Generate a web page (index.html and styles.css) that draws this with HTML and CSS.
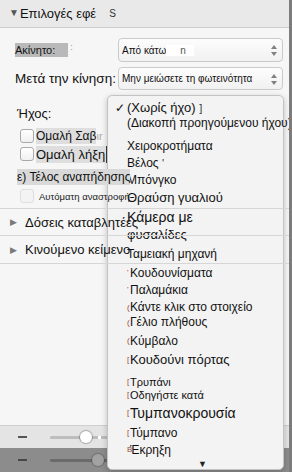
FILE: index.html
```html
<!DOCTYPE html>
<html lang="el">
<head>
    <meta charset="UTF-8">
    <meta name="viewport" content="width=device-width, initial-scale=1.0">
    <title>Επιλογές εφέ</title>
    <link rel="stylesheet" href="styles.css">
</head>
<body>
    <div class="window">
        <div class="main">
            <div class="pane-head">
                <span class="tri-down">&#9660;</span>Επιλογές εφέ<span class="stray">S</span>
            </div>

            <div class="pane">
                <div class="row row-first">
                    <span class="label label-hl">Ακίνητο:</span><span class="dots">:</span>
                    <div class="select">
                        Από κάτω<span class="ghost">n</span>
                        <svg class="spin" width="6" height="11" viewBox="0 0 6 11"><path d="M3 0L6 4H0Z M3 11L6 7H0Z" fill="#808080"/></svg>
                    </div>
                </div>
                <div class="row row-second">
                    <span class="label label-big">Μετά την κίνηση:</span>
                    <div class="select">
                        Μην μειώσετε τη φωτεινότητα
                        <svg class="spin" width="6" height="11" viewBox="0 0 6 11"><path d="M3 0L6 4H0Z M3 11L6 7H0Z" fill="#808080"/></svg>
                    </div>
                </div>
                <div class="row row-sound">
                    <span class="label label-sound">Ήχος:</span>
                </div>

                <div class="check-row cb-one">
                    <span class="box"></span><span class="shade">Ομαλή Σαβ</span><span class="faint">ιr</span>
                </div>
                <div class="check-row cb-two">
                    <span class="box"></span><span class="shade shade-big">Ομαλή λήξη</span>
                </div>
                <div class="check-row cb-bounce">
                    <span class="shade shade-wide">ε) Τέλος αναπήδησης</span>
                </div>
                <div class="check-row cb-auto">
                    <span class="box box-off"></span><span class="small-text">Αυτόματη αναστροφή</span>
                </div>

                <div class="section sec-first">
                    <span class="tri-right">&#9654;</span><span class="sec-title">Δόσεις καταβλητέες</span>
                </div>
                <div class="section">
                    <span class="tri-right">&#9654;</span><span class="sec-title">Κινούμενο κείμενο</span>
                </div>
            </div>

            <div class="zoom-bar zoom-light">
                <span class="minus"></span>
                <div class="track"><span class="knob"></span><span class="tick"></span></div>
            </div>
            <div class="zoom-bar zoom-dark">
                <span class="minus"></span>
                <div class="track"><span class="knob"></span></div>
            </div>
        </div>

        <div class="menu">
            <div class="item h16 mid"><span class="check">&#10003;</span>(Χωρίς ήχο) <span class="brk">]</span></div>
            <div class="item h14">(Διακοπή προηγούμενου ήχου)</div>
            <div class="item h16 gap8">Χειροκροτήματα</div>
            <div class="item h18">Βέλος <span class="brk">'</span></div>
            <div class="item h16">Μπόνγκο</div>
            <div class="item h20 mid">Θραύση γυαλιού</div>
            <div class="item h18 big">Κάμερα με</div>
            <div class="item h18 mid">φυσαλίδες</div>
            <div class="item h20">Ταμειακή μηχανή</div>
            <div class="item h18 marked"><span class="mark">'</span>Κουδουνίσματα</div>
            <div class="item h16 marked"><span class="mark">'</span>Παλαμάκια</div>
            <div class="item h15 gap2 marked"><span class="mark">(</span>Κάντε κλικ στο στοιχείο</div>
            <div class="item h15 marked"><span class="mark">(</span>Γέλιο πλήθους</div>
            <div class="item h22 marked"><span class="mark">(</span>Κύμβαλο</div>
            <div class="item h16 mid marked"><span class="mark">[</span>Κουδούνι πόρτας</div>
            <div class="item h14 gap7 tiny marked"><span class="mark">[</span>Τρυπάνι</div>
            <div class="item h12 tiny marked"><span class="mark">[</span>Οδηγήστε κατά</div>
            <div class="item h24 big marked"><span class="mark">[</span>Τυμπανοκρουσία</div>
            <div class="item h16 marked"><span class="mark">[</span>Τύμπανο</div>
            <div class="item h18 marked"><span class="mark">B</span>Έκρηξη</div>
            <div class="more">&#9660;</div>
        </div>
    </div>
</body>
</html>
```

FILE: styles.css
```css
body {
    margin: 0;
    font-family: "Liberation Sans", Arial, sans-serif;
    color: #111;
    background: #fff;
}
.window {
    position: relative;
    width: 289px;
    height: 472px;
    border-right: 3px solid #7c7c7c;
    background: #f6f6f6;
    overflow: hidden;
}
.main {
    display: flex;
    flex-direction: column;
    height: 100%;
}
.pane-head {
    box-sizing: border-box;
    height: 28px;
    border-bottom: 1px solid #cdcdcd;
    background: #e9e9e9;
    display: flex;
    align-items: center;
    padding-left: 9px;
    font-size: 13px;
}
.tri-down {
    font-size: 10px;
    color: #555;
    margin-right: 1px;
    margin-top: -2px;
}
.stray {
    font-size: 10px;
    margin-left: 13px;
    color: #333;
}
.pane {
    flex: 1;
    padding-top: 10px;
}
.row {
    display: flex;
    align-items: center;
    padding: 0 6px 0 15px;
}
.row-first { height: 24px; }
.row-second { height: 23px; margin-top: 5px; }
.row-sound { height: 22px; margin-top: 12px; }
.label {
    flex: 0 0 auto;
    white-space: nowrap;
}
.label-hl {
    font-size: 11px;
    background: #b9b9b9;
    padding: 1px 13px 1px 0;
}
.dots {
    font-size: 9px;
    color: #999;
    margin-left: 2px;
    margin-top: -6px;
}
.label-big { font-size: 13.5px; }
.label-sound { font-size: 13px; padding-left: 2px; }
.select {
    position: relative;
    width: 165px;
    height: 100%;
    margin-left: auto;
    box-sizing: border-box;
    border: 1px solid #cacaca;
    border-radius: 4px;
    background: linear-gradient(#fdfdfd, #f1f1f1);
    font-size: 10px;
    display: flex;
    align-items: center;
    padding-left: 3px;
    white-space: nowrap;
}
.ghost {
    background: #fff;
    padding: 0 8px 0 14px;
    color: #555;
}
.spin {
    position: absolute;
    right: 5px;
    top: 6px;
}
.check-row {
    display: flex;
    align-items: center;
    height: 18px;
    padding-left: 20px;
    position: relative;
    z-index: 2;
    white-space: nowrap;
}
.cb-one { margin-top: 3px; }
.cb-bounce { margin-top: 5px; padding-left: 17px; }
.cb-auto { margin-top: 1px; }
.box {
    width: 12px;
    height: 12px;
    border: 1px solid #a9a9a9;
    border-radius: 3px;
    background: linear-gradient(#fff, #f0f0f0);
    margin-right: 2px;
}
.box-off {
    border-color: #dedede;
    background: #f3f3f3;
}
.shade {
    background: #dedede;
    font-size: 12px;
    padding: 1px 0;
}
.shade-big { font-size: 13px; padding-right: 1px; border-right: 1px solid #333; }
.shade-wide { background: #d9d9d9; }
.faint { font-size: 11px; color: #aaa; }
.small-text {
    font-size: 9.5px;
    margin-left: 3px;
    color: #222;
}
.section {
    display: flex;
    align-items: center;
    height: 27px;
    border-bottom: 1px solid #d6d6d6;
    padding-left: 10px;
    position: relative;
    z-index: 2;
}
.sec-first {
    margin-top: 3px;
    border-top: 1px solid #d6d6d6;
    height: 26px;
}
.tri-right {
    font-size: 9px;
    color: #7a7a7a;
    margin-right: 8px;
}
.sec-title {
    font-size: 13px;
    white-space: nowrap;
}
.zoom-bar {
    display: flex;
    align-items: center;
    padding-left: 18px;
}
.zoom-light {
    height: 22px;
    border-top: 1px solid #cfcfcf;
    background: #e4e4e4;
}
.zoom-dark {
    height: 24px;
    background: #8c8c8c;
}
.minus {
    width: 9px;
    height: 2px;
    background: #555;
    margin-right: 23px;
}
.zoom-dark .minus { background: #474747; }
.track {
    position: relative;
    width: 60px;
    height: 3px;
    border-radius: 2px;
    background: #bdbdbd;
}
.zoom-dark .track { background: #6a6a6a; }
.knob {
    position: absolute;
    left: 30px;
    top: -5px;
    width: 12px;
    height: 12px;
    border-radius: 50%;
    background: #fff;
    box-shadow: 0 0 1px 1px rgba(0,0,0,0.25);
}
.zoom-dark .knob {
    left: 42px;
    background: #a2a2a2;
    box-shadow: 0 0 1px 1px rgba(0,0,0,0.2);
}
.tick {
    position: absolute;
    left: 48px;
    top: 0;
    width: 3px;
    height: 3px;
    background: #fff;
}
.menu {
    position: absolute;
    left: 107px;
    top: 95px;
    width: 177px;
    height: 375px;
    box-sizing: border-box;
    border: 1px solid #c3c3c3;
    border-radius: 5px;
    background: #f3f3f3;
    box-shadow: 0 2px 6px rgba(0,0,0,0.22);
    padding-top: 4px;
    padding-left: 19px;
    z-index: 1;
    font-size: 12px;
    color: #111;
}
.item {
    position: relative;
    white-space: nowrap;
}
.marked { padding-left: 3px; }
.h12 { height: 12px; line-height: 12px; }
.h14 { height: 14px; line-height: 14px; }
.h15 { height: 15px; line-height: 15px; }
.h16 { height: 16px; line-height: 16px; }
.h18 { height: 18px; line-height: 18px; }
.h20 { height: 20px; line-height: 20px; }
.h22 { height: 22px; line-height: 22px; }
.h24 { height: 24px; line-height: 24px; }
.gap8 { margin-top: 8px; }
.gap7 { margin-top: 7px; }
.gap2 { margin-top: 2px; }
.big { font-size: 14px; }
.mid { font-size: 13px; }
.tiny { font-size: 11px; }
.check {
    position: absolute;
    left: -12px;
    font-size: 12px;
}
.brk { font-size: 11px; color: #333; }
.mark {
    position: absolute;
    left: 0;
    top: 0;
    font-size: 8px;
    color: #9a4a35;
}
.more {
    font-size: 9px;
    color: #222;
    padding-left: 71px;
    line-height: 11px;
}
```
